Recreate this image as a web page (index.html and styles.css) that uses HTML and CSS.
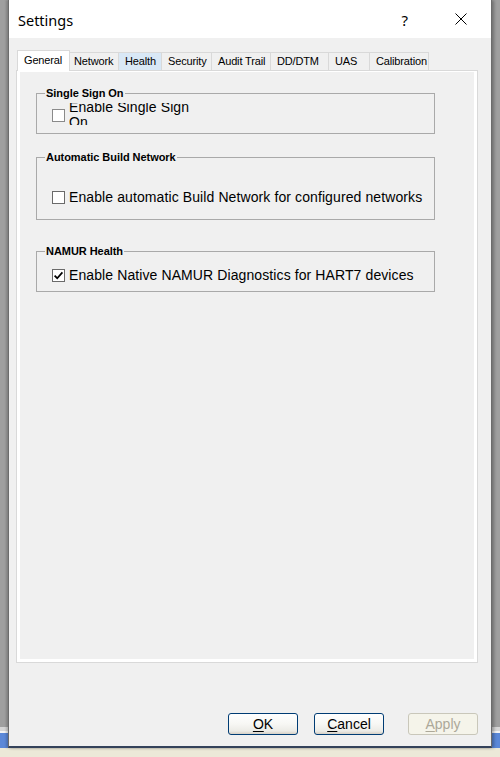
FILE: index.html
```html
<!DOCTYPE html>
<html>
<head>
<meta charset="utf-8">
<link rel="stylesheet" href="styles.css">
</head>
<body>
<div class="window">
  <div class="titlebar">
    <span class="title">Settings</span>
    <span class="help">?</span>
    <svg class="close" width="12" height="12" viewBox="0 0 12 12"><path d="M0.5 0.5 L11.5 11.5 M11.5 0.5 L0.5 11.5" stroke="#000" stroke-width="1" fill="none"/></svg>
  </div>
  <div class="client">
    <div class="tabs">
      <div class="tab selected">General</div>
      <div class="tab">Network</div>
      <div class="tab hover">Health</div>
      <div class="tab">Security</div>
      <div class="tab">Audit Trail</div>
      <div class="tab">DD/DTM</div>
      <div class="tab">UAS</div>
      <div class="tab">Calibration</div>
    </div>
    <div class="panel">
      <div class="panel-inner">
        <fieldset class="group group-sso">
          <legend>Single Sign On</legend>
          <div class="row">
            <span class="cb"></span>
            <div class="clip"><span class="clip-text">Enable Single Sign On</span></div>
          </div>
        </fieldset>
        <fieldset class="group group-build">
          <legend>Automatic Build Network</legend>
          <div class="row">
            <span class="cb"></span>
            <span class="label">Enable automatic Build Network for configured networks</span>
          </div>
        </fieldset>
        <fieldset class="group group-namur">
          <legend>NAMUR Health</legend>
          <div class="row">
            <span class="cb checked"><svg width="11" height="11" viewBox="0 0 11 11"><path d="M1.6 5.6 L4.2 8.2 L9.4 2.4" stroke="#000" stroke-width="1.7" fill="none"/></svg></span>
            <span class="label">Enable Native NAMUR Diagnostics for HART7 devices</span>
          </div>
        </fieldset>
      </div>
    </div>
    <div class="buttons">
      <button class="btn"><u>O</u>K</button>
      <button class="btn cancel"><u>C</u>ancel</button>
      <button class="btn apply" disabled><u>A</u>pply</button>
    </div>
  </div>
</div>
</body>
</html>
```
FILE: styles.css
```css
* { box-sizing: border-box; }
html, body {
  margin: 0;
  width: 500px;
  height: 757px;
  overflow: hidden;
}
body {
  background: linear-gradient(to bottom,
    #9f9f9f 0, #9f9f9f 727px,
    #d6d6d6 727px, #d6d6d6 731px,
    #f4f4f4 731px, #f4f4f4 733px,
    #5b88d8 733px, #5b88d8 748px,
    #ece9d8 748px);
  font-family: "Liberation Sans", Arial, sans-serif;
  color: #000;
}
.window {
  margin-left: 8px;
  width: 484px;
  height: 748px;
  background: #f0f0f0;
  border-left: 1px solid #6c6c6c;
  border-right: 1px solid #6c6c6c;
  border-bottom: 2px solid #34425a;
  box-shadow: -2px 0 2px rgba(0,0,0,0.18), 2px 0 3px rgba(0,0,0,0.3);
  display: flex;
  flex-direction: column;
}
.titlebar {
  height: 38px;
  background: #fff;
  display: flex;
  align-items: center;
  padding-left: 9px;
  padding-right: 24px;
}
.title {
  font-family: "Noto Sans", "Open Sans", sans-serif;
  font-size: 14.5px;
  position: relative;
  top: 1px;
}
.help {
  margin-left: auto;
  font-family: "Noto Sans", "Open Sans", sans-serif;
  font-size: 15px;
  margin-right: 47px;
  position: relative;
  top: 1px;
}
.close { display: block; }
.client {
  display: flex;
  flex-direction: column;
  padding: 12px 13px 0 7px;
}
.tabs {
  display: flex;
  align-items: flex-start;
  padding-left: 1px;
  margin-bottom: -1px;
  position: relative;
  z-index: 1;
}
.tab {
  height: 18px;
  margin-top: 2px;
  margin-left: -1px;
  border: 1px solid #d9d9d9;
  border-bottom: none;
  background: #f0f0f0;
  font-size: 11px;
  line-height: 17px;
  letter-spacing: -0.15px;
  padding-left: 6px;
  white-space: nowrap;
}
.tab:nth-child(1) { width: 53px; margin-left: 0; }
.tab:nth-child(2) { width: 50px; padding-left: 4px; }
.tab:nth-child(3) { width: 44px; }
.tab:nth-child(4) { width: 51px; }
.tab:nth-child(5) { width: 60px; }
.tab:nth-child(6) { width: 59px; }
.tab:nth-child(7) { width: 42px; }
.tab:nth-child(8) { width: 60px; }
.tab.selected {
  height: 21px;
  margin-top: 0;
  background: #fff;
  padding-top: 1px;
  padding-left: 6px;
}
.tab.hover {
  background: #d9e8f6;
}
.panel {
  width: 462px;
  height: 593px;
  border: 1px solid #d9d9d9;
  background: #fff;
  padding: 1px 3px 3px 3px;
}
.panel-inner {
  height: 100%;
  background: #f0f0f0;
  padding-left: 16px;
  display: flex;
  flex-direction: column;
  align-items: flex-start;
}
.group {
  margin: 0;
  padding: 0;
  min-inline-size: 0;
  width: 399px;
  border: 1px solid #a9a9a9;
}
.group legend {
  font-size: 11px;
  font-weight: bold;
  line-height: 13px;
  letter-spacing: -0.05px;
  margin-left: 8px;
  padding: 0 1px;
}
.group-sso { margin-top: 15px; }
.group-build { margin-top: 17px; }
.group-namur { margin-top: 25px; }
.row {
  display: flex;
  align-items: center;
  padding-left: 15px;
  font-size: 14px;
  letter-spacing: 0.1px;
}
.group-sso .row { height: 22px; margin: 3px 0 8px; }
.group-build .row { height: 18px; margin: 24px 0 13px; }
.group-namur .row { height: 18px; margin: 8px 0 7px; }
.cb {
  width: 13px;
  height: 13px;
  border: 1px solid #6a6a6a;
  background: #fff;
  margin-right: 4px;
  flex: none;
  display: flex;
  align-items: center;
  justify-content: center;
}
.group-sso .cb { margin-top: 2px; border-color: #8a8a8a; }
.label {
  line-height: 18px;
  white-space: nowrap;
}
.clip {
  width: 125px;
  height: 22px;
  overflow: hidden;
  align-self: flex-start;
}
.clip-text {
  display: block;
  line-height: 15px;
  margin-top: -3px;
}
.buttons {
  display: flex;
  justify-content: flex-end;
  margin-top: 50px;
}
.btn {
  width: 70px;
  height: 22px;
  margin: 0;
  padding: 0;
  border: 1px solid #003c74;
  border-radius: 3px;
  background: linear-gradient(to bottom, #ffffff 0%, #f7f7f4 50%, #ecebe6 85%, #d6d0c5 100%);
  font-family: "Liberation Sans", Arial, sans-serif;
  font-size: 14px;
  color: #000;
  line-height: 20px;
}
.btn u { text-underline-offset: 2px; }
.cancel { margin-left: 16px; }
.apply {
  margin-left: 24px;
  border-color: #c9c7ba;
  background: #f5f4ea;
  color: #aca899;
}
```
